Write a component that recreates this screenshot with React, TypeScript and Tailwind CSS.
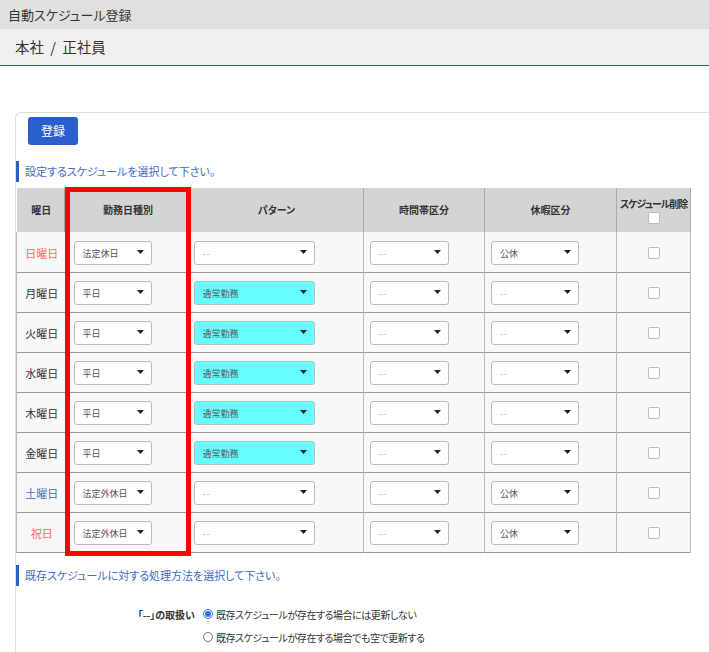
const FONT = "font-['Noto_Sans_CJK_JP','Liberation_Sans',sans-serif] [font-feature-settings:'palt']";

const ROWS = [
  { day: "日曜日", color: "text-[#f76c6c]", kind: "法定休日", pattern: "--", leave: "公休" },
  { day: "月曜日", color: "text-[#333]", kind: "平日", pattern: "通常勤務", leave: "--" },
  { day: "火曜日", color: "text-[#333]", kind: "平日", pattern: "通常勤務", leave: "--" },
  { day: "水曜日", color: "text-[#333]", kind: "平日", pattern: "通常勤務", leave: "--" },
  { day: "木曜日", color: "text-[#333]", kind: "平日", pattern: "通常勤務", leave: "--" },
  { day: "金曜日", color: "text-[#333]", kind: "平日", pattern: "通常勤務", leave: "--" },
  { day: "土曜日", color: "text-[#4a6fb5]", kind: "法定外休日", pattern: "--", leave: "公休" },
  { day: "祝日", color: "text-[#f76c6c]", kind: "法定外休日", pattern: "--", leave: "公休" },
];

function Select({ value, width, cyan }: { value: string; width: string; cyan?: boolean }) {
  const empty = value === "--";
  return (
    <div
      className={`flex h-[24px] items-center justify-between rounded-[3px] border border-[#bbb] pl-[8px] pr-[7px] text-[9px] ${width} ${
        cyan ? "bg-[#66ffff]" : "bg-white"
      } ${empty ? "text-[#aaa] [font-feature-settings:normal] tracking-[1px]" : "text-[#555]"}`}
    >
      <span className="mt-[1px]">{value}</span>
      <svg width="7" height="4" viewBox="0 0 7 4" className="mb-[2px]">
        <path d="M0 0h7L3.5 4z" fill="#222" />
      </svg>
    </div>
  );
}

function Check() {
  return <div className="mx-auto h-[12px] w-[12px] rounded-[2px] border border-[#bbb] bg-white" />;
}

function SectionLabel({ children }: { children: string }) {
  return (
    <div className="flex h-[21px] items-center border-l-[3px] border-[#2b5fcb] pl-[6px] text-[11px] text-[#3a6bc8]">
      {children}
    </div>
  );
}

export default function App() {
  return (
    <div className={`relative h-[652px] w-[709px] overflow-hidden bg-white ${FONT}`}>
      <div className="flex h-[29px] items-center bg-[#e0e0de] pl-[8px] text-[13px] text-[#333]">
        自動スケジュール登録
      </div>
      <div className="flex h-[37px] items-center border-b border-[#2a5caa] bg-[#f1f0ee] pl-[15px] text-[14.5px] text-[#333] [word-spacing:3px]">
        本社 / 正社員
      </div>

      <div className="mt-[46px] ml-[15px] h-[560px] rounded-tl-[6px] border-t border-l border-[#ddd] pt-[4px]">
        <button className="ml-[12px] h-[28px] w-[50px] rounded-[3px] bg-[#2b5fcb] text-[12px] text-white">
          登録
        </button>

        <div className="mt-[16px]">
          <SectionLabel>設定するスケジュールを選択して下さい。</SectionLabel>
        </div>

        <table className="mt-[6px] w-[674px] table-fixed border-collapse text-[10px]">
          <colgroup>
            <col className="w-[48px]" />
            <col className="w-[125px]" />
            <col className="w-[174px]" />
            <col className="w-[121px]" />
            <col className="w-[132px]" />
            <col className="w-[74px]" />
          </colgroup>
          <thead>
            <tr className="h-[44px] bg-[#d3d5d4] font-bold text-[#333]">
              <th className="border-r border-[#aaa] pb-[2px] pl-[2px]">曜日</th>
              <th className="border-r border-[#aaa] pb-[2px] pl-[2px]">勤務日種別</th>
              <th className="border-r border-[#aaa] pb-[2px]">パターン</th>
              <th className="border-r border-[#aaa] pb-[2px]">時間帯区分</th>
              <th className="border-r border-[#aaa] pb-[2px]">休暇区分</th>
              <th className="border-r border-[#aaa] px-0 align-middle">
                <div className="whitespace-nowrap leading-[14px] tracking-[-1.1px]">スケジュール削除</div>
                <div className="mt-[1px]">
                  <Check />
                </div>
              </th>
            </tr>
          </thead>
          <tbody>
            {ROWS.map((r) => (
              <tr key={r.day} className="h-[40px] border-b border-[#999] bg-[#f8f8f8]">
                <td className={`border-l border-[#bbb] pt-[2px] pl-[2px] text-center text-[11px] ${r.color}`}>{r.day}</td>
                <td className="pt-[2px] pl-[9px]">
                  <Select value={r.kind} width="w-[78px]" />
                </td>
                <td className="border-r border-[#bbb] pt-[2px] pl-[4px]">
                  <Select value={r.pattern} width="w-[121px]" cyan={r.pattern !== "--"} />
                </td>
                <td className="border-r border-[#bbb] pt-[2px] pl-[6px]">
                  <Select value="--" width="w-[79px]" />
                </td>
                <td className="border-r border-[#bbb] pt-[2px] pl-[6px]">
                  <Select value={r.leave} width="w-[88px]" />
                </td>
                <td className="border-r border-[#bbb] pt-[2px]">
                  <Check />
                </td>
              </tr>
            ))}
          </tbody>
        </table>

        <div className="mt-[12px]">
          <SectionLabel>既存スケジュールに対する処理方法を選択して下さい。</SectionLabel>
        </div>

        <div className="mt-[21px] ml-[120px] flex flex-col gap-[8px] text-[10px] tracking-[-0.45px] text-[#333]">
          <div className="flex h-[15px] items-center">
            <span className="mr-[8px] w-[59px] whitespace-nowrap text-right font-bold tracking-normal">「--」の取扱い</span>
            <span className="mr-[3px] flex h-[10px] w-[10px] items-center justify-center rounded-full border border-[#2b6fe0]">
              <span className="h-[6px] w-[6px] rounded-full bg-[#2b6fe0]" />
            </span>
            既存スケジュールが存在する場合には更新しない
          </div>
          <div className="flex h-[15px] items-center">
            <span className="mr-[8px] w-[59px]" />
            <span className="mr-[3px] h-[10px] w-[10px] rounded-full border border-[#777]" />
            既存スケジュールが存在する場合でも空で更新する
          </div>
        </div>
      </div>

      <div className="pointer-events-none absolute top-[187px] left-[65px] h-[369px] w-[126px] border-[5px] border-[#ff0000]" />
    </div>
  );
}
